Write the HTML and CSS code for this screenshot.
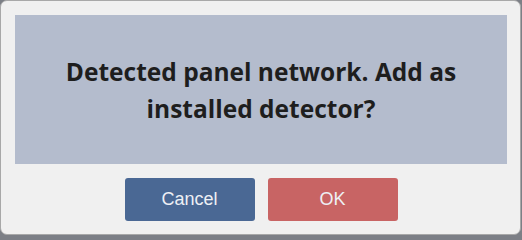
FILE: index.html
```html
<!DOCTYPE html>
<html>
<head>
<meta charset="utf-8">
<link rel="stylesheet" href="styles.css">
</head>
<body>
<div class="dialog">
  <div class="message">
    <p class="text">Detected panel network. Add as installed detector?</p>
  </div>
  <div class="actions">
    <button class="btn cancel">Cancel</button>
    <button class="btn ok">OK</button>
  </div>
</div>
</body>
</html>
```

FILE: styles.css
```css
html, body {
  margin: 0;
  padding: 0;
  background: #7c7f86;
}
.dialog {
  box-sizing: border-box;
  width: 521px;
  height: 235px;
  background: #f0f0f0;
  border: 1px solid #a8a8a8;
  border-radius: 7px;
  padding: 14px 13px 0 14px;
  display: flex;
  flex-direction: column;
}
.message {
  height: 149px;
  background: #b4bccd;
  display: flex;
  align-items: center;
  justify-content: center;
}
.text {
  margin: 0;
  width: 430px;
  text-align: center;
  font-family: "Open Sans", sans-serif;
  font-weight: bold;
  font-size: 24.5px;
  line-height: 37px;
  color: #1e1e1e;
}
.actions {
  display: flex;
  justify-content: center;
  gap: 13px;
  margin-top: 14px;
}
.btn {
  width: 130px;
  height: 43px;
  border: none;
  border-radius: 3px;
  font-family: "Liberation Sans", Arial, sans-serif;
  font-size: 18px;
  color: #eef0f4;
  padding: 0;
}
.cancel {
  background: #4a6894;
}
.ok {
  background: #c86464;
}
```
